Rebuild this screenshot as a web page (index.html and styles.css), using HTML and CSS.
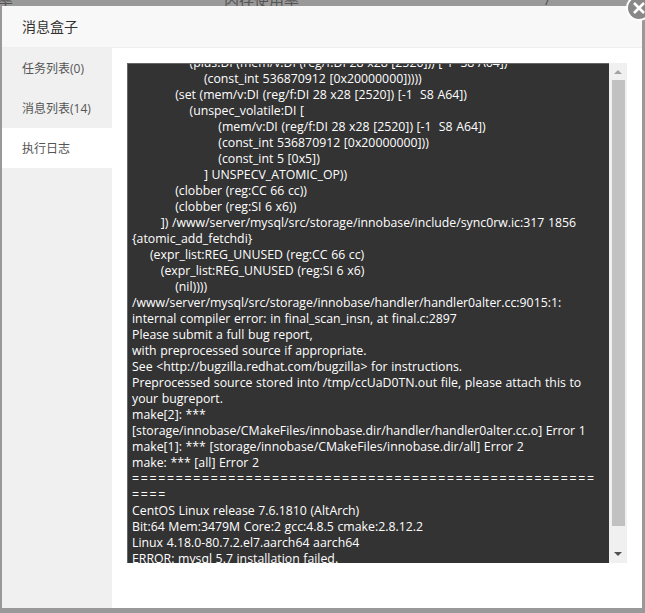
FILE: index.html
```html
<!DOCTYPE html>
<html lang="en">
<head>
    <meta charset="UTF-8">
    <title>消息盒子</title>
    <link rel="stylesheet" href="styles.css">
</head>
<body>
    <div class="backdrop-text">
        <span class="ghost-left">率</span>
        <span class="ghost-right">内存使用率</span>
        <span class="ghost-slash">/</span>
    </div>
    <div class="dialog">
        <div class="dialog-title">消息盒子</div>
        <button class="close-btn" aria-label="close">
            <svg width="16" height="16" viewBox="0 0 16 16"><path d="M3 3 L13 13 M13 3 L3 13" stroke="#fff" stroke-width="2.6" fill="none"/></svg>
        </button>
        <div class="dialog-body">
            <ul class="side-menu">
                <li>任务列表(0)</li>
                <li>消息列表(14)</li>
                <li class="active">执行日志</li>
            </ul>
            <div class="content">
                <div class="log-box">
                    <div class="log-view">
                        <pre class="log-text">                (plus:DI (mem/v:DI (reg/f:DI 28 x28 [2520])) [-1  S8 A64])
                    (const_int 536870912 [0x20000000]))))
            (set (mem/v:DI (reg/f:DI 28 x28 [2520]) [-1  S8 A64])
                (unspec_volatile:DI [
                        (mem/v:DI (reg/f:DI 28 x28 [2520]) [-1  S8 A64])
                        (const_int 536870912 [0x20000000]))
                        (const_int 5 [0x5])
                    ] UNSPECV_ATOMIC_OP))
            (clobber (reg:CC 66 cc))
            (clobber (reg:SI 6 x6))
        ]) /www/server/mysql/src/storage/innobase/include/sync0rw.ic:317 1856 {atomic_add_fetchdi}
     (expr_list:REG_UNUSED (reg:CC 66 cc)
        (expr_list:REG_UNUSED (reg:SI 6 x6)
            (nil))))
/www/server/mysql/src/storage/innobase/handler/handler0alter.cc:9015:1: internal compiler error: in final_scan_insn, at final.c:2897
Please submit a full bug report,
with preprocessed source if appropriate.
See &lt;http://bugzilla.redhat.com/bugzilla&gt; for instructions.
Preprocessed source stored into /tmp/ccUaD0TN.out file, please attach this to your bugreport.
make[2]: *** [storage/innobase/CMakeFiles/innobase.dir/handler/handler0alter.cc.o] Error 1
make[1]: *** [storage/innobase/CMakeFiles/innobase.dir/all] Error 2
make: *** [all] Error 2
<span class="rule">=========================================================</span>
CentOS Linux release 7.6.1810 (AltArch)
Bit:64 Mem:3479M Core:2 gcc:4.8.5 cmake:2.8.12.2
Linux 4.18.0-80.7.2.el7.aarch64 aarch64
ERROR: mysql 5.7 installation failed.</pre>
                    </div>
                    <div class="scrollbar">
                        <span class="arrow arrow-up"></span>
                        <div class="scroll-track"><div class="scroll-thumb"></div></div>
                        <span class="arrow arrow-down"></span>
                    </div>
                </div>
            </div>
        </div>
    </div>
</body>
</html>
```

FILE: styles.css
```css
* {
    box-sizing: border-box;
}

html, body {
    height: 613px;
}

body {
    margin: 0;
    padding: 6px 3px 5px 2px;
    background: #999;
    font-family: "Open Sans", "Noto Sans CJK SC", sans-serif;
    overflow: hidden;
    position: relative;
}

.backdrop-text {
    position: absolute;
    top: -11px;
    left: 0;
    width: 100%;
    font-size: 15px;
    color: #555;
}

.ghost-left {
    position: absolute;
    left: -2px;
}

.ghost-right {
    position: absolute;
    left: 224px;
}

.ghost-slash {
    position: absolute;
    left: 545px;
}

.dialog {
    position: relative;
    height: 602px;
    background: #fff;
    display: flex;
    flex-direction: column;
}

.dialog-title {
    height: 42px;
    line-height: 41px;
    padding-left: 20px;
    font-size: 14px;
    color: #333;
    background: #f8f8f8;
    border-bottom: 1px solid #eee;
}

.close-btn {
    position: absolute;
    top: -11px;
    right: -10px;
    width: 26px;
    height: 26px;
    padding: 0;
    border: 2px solid #fff;
    border-radius: 50%;
    background: #888;
    display: flex;
    align-items: center;
    justify-content: center;
}

.dialog-body {
    flex: 1;
    display: flex;
    min-height: 0;
}

.side-menu {
    width: 110px;
    margin: 0;
    padding: 0;
    list-style: none;
    background: #f0f0f0;
    font-size: 12px;
    color: #555;
}

.side-menu li {
    height: 40px;
    line-height: 42px;
    padding-left: 20px;
}

.side-menu li.active {
    background: #fff;
}

.content {
    flex: 1;
    padding: 15px 15px 45px 15px;
}

.log-box {
    display: flex;
    width: 500px;
    height: 500px;
}

.log-view {
    flex: 1;
    min-width: 0;
    overflow: hidden;
    background: #333;
    border-top: 1px solid #666;
    border-left: 1px solid #666;
    padding: 0 6px 0 4px;
}

.log-text {
    margin: -9px 0 0;
    color: #fff;
    font-family: "Open Sans", sans-serif;
    font-size: 12.3px;
    word-spacing: 0.4px;
    line-height: 16px;
    white-space: pre-wrap;
    overflow-wrap: break-word;
}

.rule {
    letter-spacing: 1.72px;
}

.scrollbar {
    width: 18px;
    background: #f0f0f0;
    display: flex;
    flex-direction: column;
    align-items: center;
}

.arrow {
    width: 0;
    height: 0;
    margin: 7px 0 6px;
    border-left: 4px solid transparent;
    border-right: 4px solid transparent;
}

.arrow-up {
    border-bottom: 4px solid #a3a3a3;
}

.arrow-down {
    margin: 6px 0 7px;
    border-top: 4px solid #505050;
}

.scroll-track {
    flex: 1;
    width: 100%;
    padding: 0 2px 0 3px;
}

.scroll-thumb {
    height: 446px;
    background: #c1c1c1;
}
```
